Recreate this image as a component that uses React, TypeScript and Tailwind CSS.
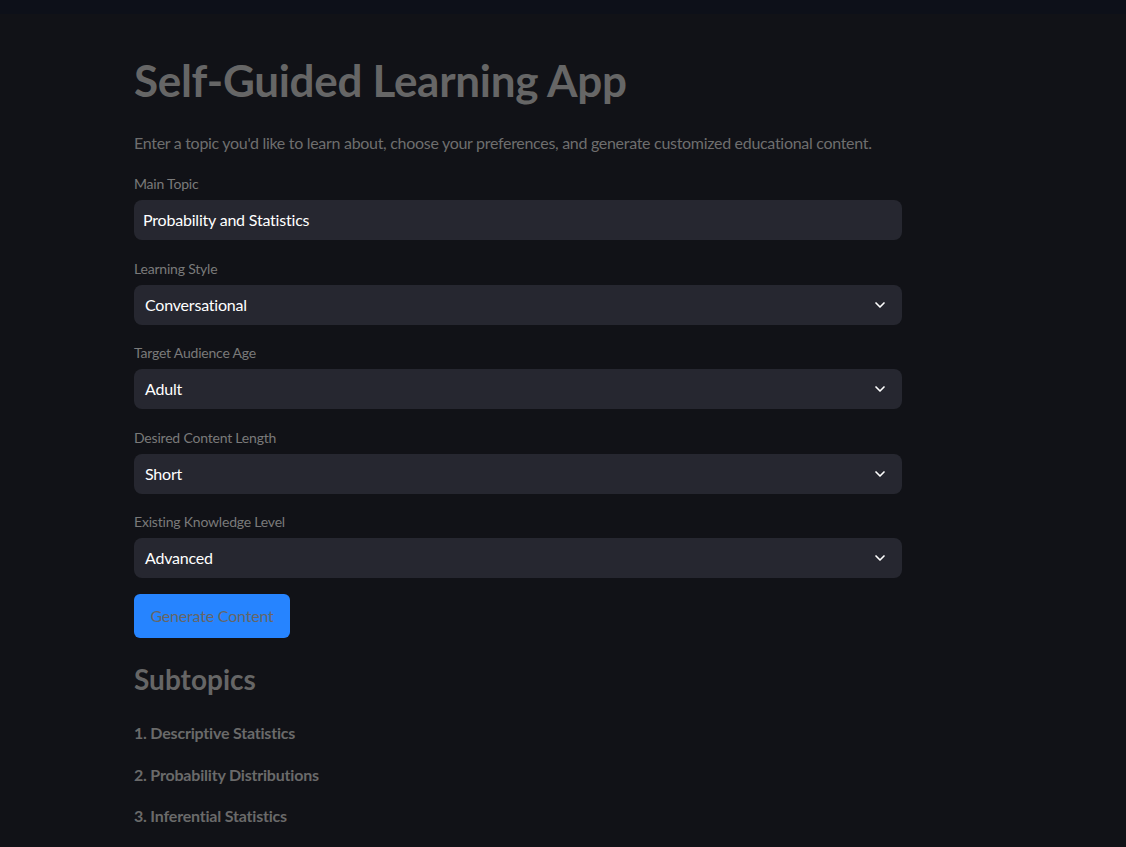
import { ChevronDown } from "lucide-react"

const selects = [
    { label: "Learning Style", value: "Conversational" },
    { label: "Target Audience Age", value: "Adult" },
    { label: "Desired Content Length", value: "Short" },
    { label: "Existing Knowledge Level", value: "Advanced" },
]

const subtopics = ["1. Descriptive Statistics", "2. Probability Distributions", "3. Inferential Statistics"]

export default function App() {
    return (
        <div className="min-h-[847px] bg-[#111217] font-['Lato',sans-serif]">
            {/* barra superior */}
            <div className="h-[14px] bg-[#0d1019]" />

            <main className="mx-auto w-[768px] -translate-x-[45px] pt-[40px]">
                <h1 className="text-[44px] font-bold leading-[53px] text-[#666666] tracking-[-0.3px]">
                    Self-Guided Learning App
                </h1>
                <p className="mt-[24px] text-[16px] leading-[24px] text-[#6e6e6e] tracking-[-0.3px] whitespace-nowrap">
                    Enter a topic you'd like to learn about, choose your preferences, and generate customized educational content.
                </p>

                <div className="mt-[19px] flex flex-col gap-[18.5px]">
                    <div className="flex flex-col gap-[6px]">
                        <label className="text-[14px] leading-[20px] text-[#7a7a7a] tracking-[-0.2px]">Main Topic</label>
                        <div className="h-[40px] rounded-[8px] bg-[#262730] px-[9px] flex items-center text-[16px] text-white tracking-[-0.2px]">
                            Probability and Statistics
                        </div>
                    </div>

                    {selects.map((s) => (
                        <div key={s.label} className="flex flex-col gap-[6px]">
                            <label className="text-[14px] leading-[20px] text-[#7a7a7a] tracking-[-0.2px]">{s.label}</label>
                            <div className="h-[40px] rounded-[8px] bg-[#262730] pl-[11px] pr-[14px] flex items-center justify-between text-[16px] text-white tracking-[-0.2px]">
                                <span>{s.value}</span>
                                <ChevronDown size={16} strokeWidth={2.5} className="text-white" />
                            </div>
                        </div>
                    ))}
                </div>

                <button className="mt-[16px] h-[44px] w-[156px] rounded-[6px] bg-[#2684ff] text-[16px] text-[#666666] tracking-[-0.2px]">
                    Generate Content
                </button>

                <h2 className="mt-[23px] text-[28px] font-bold leading-[36px] text-[#666666]">
                    Subtopics
                </h2>

                <ul className="mt-[24px] flex flex-col gap-[17.5px]">
                    {subtopics.map((t) => (
                        <li key={t} className="text-[16px] font-bold leading-[24px] text-[#6a6a6a] tracking-[-0.2px]">{t}</li>
                    ))}
                </ul>
            </main>
        </div>
    )
}
